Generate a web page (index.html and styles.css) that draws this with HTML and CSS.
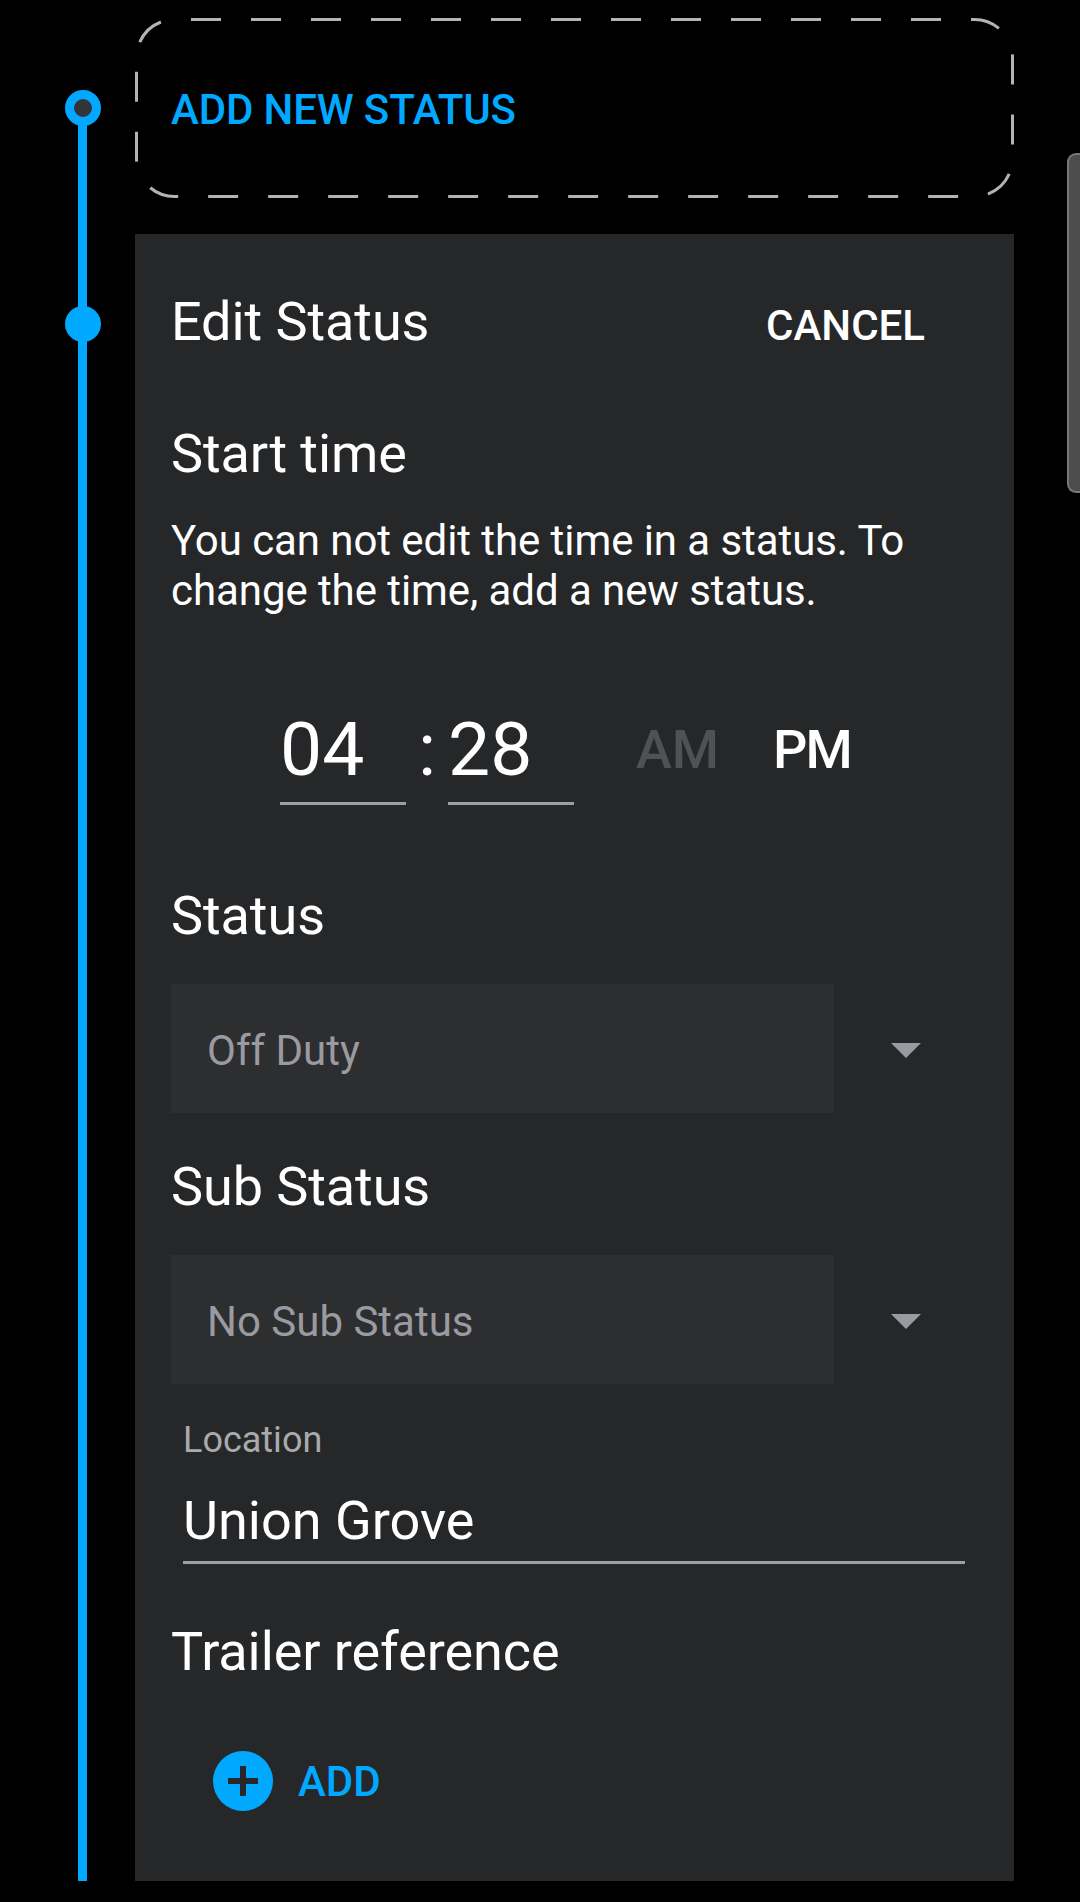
FILE: index.html
```html
<!doctype html>
<html>

<head>
    <link rel="stylesheet" href="styles.css">
</head>

<body>
    <div class="page">
        <div class="rail"></div>

        <div class="add-box">
            <span class="dot dot-open"></span>
            <svg class="dash-frame" width="879" height="180">
                <rect x="1.5" y="1.5" width="876" height="177" rx="38" ry="38"></rect>
            </svg>
            <span class="add-status">ADD NEW STATUS</span>
        </div>

        <div class="card">
            <span class="dot dot-full"></span>

            <div class="card-head">
                <div class="title">Edit Status</div>
                <div class="cancel">CANCEL</div>
            </div>

            <div class="title start-title">Start time</div>
            <div class="note">You can not edit the time in a status. To change the time, add a new status.</div>

            <div class="time-row">
                <div class="time-field">04</div>
                <div class="colon">:</div>
                <div class="time-field">28</div>
                <div class="ampm am">AM</div>
                <div class="ampm pm">PM</div>
            </div>

            <div class="title status-title">Status</div>
            <div class="select-row">
                <div class="select-box">Off Duty</div>
                <div class="arrow"></div>
            </div>

            <div class="title sub-title">Sub Status</div>
            <div class="select-row">
                <div class="select-box">No Sub Status</div>
                <div class="arrow"></div>
            </div>

            <div class="location">
                <div class="location-label">Location</div>
                <div class="location-value">Union Grove</div>
            </div>

            <div class="title trailer-title">Trailer reference</div>
            <div class="add-row">
                <svg class="plus" width="60" height="60" viewBox="0 0 60 60">
                    <circle cx="30" cy="30" r="30" fill="#00a8ff"></circle>
                    <path d="M27 15h6v12h12v6H33v12h-6V33H15v-6h12z" fill="#262729"></path>
                </svg>
                <span class="add-text">ADD</span>
            </div>
        </div>

        <div class="scroll-thumb"></div>
    </div>
</body>

</html>
```

FILE: styles.css
```css
* {
    box-sizing: border-box;
    margin: 0;
    padding: 0;
}

html,
body {
    height: 100%;
    overflow: hidden;
}

body {
    background: #000;
    font-family: Roboto, "Noto Sans", sans-serif;
    color: #fff;
}

.page {
    position: relative;
    height: 1902px;
    padding: 18px 66px 0 135px;
}

.rail {
    position: absolute;
    left: 78px;
    top: 108px;
    width: 9px;
    height: 1773px;
    background: #00a8ff;
}

.dot {
    position: absolute;
    left: -70px;
    width: 36px;
    height: 36px;
    border-radius: 50%;
    background: #00a8ff;
}

.dot-open {
    top: 72px;
    border: 9px solid #00a8ff;
    background: #333437;
}

.dot-full {
    top: 72px;
}

.add-box {
    position: relative;
    height: 180px;
    display: flex;
    align-items: center;
    padding: 3px 0 0 36px;
}

.dash-frame {
    position: absolute;
    left: 0;
    top: 0;
}

.dash-frame rect {
    fill: none;
    stroke: #b3b3b3;
    stroke-width: 3;
    stroke-dasharray: 30 30;
    stroke-dashoffset: 43.5;
}

.add-status {
    font-size: 42px;
    font-weight: 500;
    letter-spacing: -0.15px;
    color: #00a8ff;
}

.card {
    position: relative;
    margin-top: 36px;
    padding: 58px 0 70px 36px;
    background: #262729;
}

.card-head {
    display: flex;
    justify-content: space-between;
    align-items: baseline;
    padding-right: 89px;
}

.title {
    font-size: 54px;
    line-height: 60px;
    letter-spacing: -0.08px;
}

.cancel {
    font-size: 42px;
    font-weight: 500;
}

.start-title {
    margin-top: 72px;
}

.note {
    width: 780px;
    margin-top: 32px;
    font-size: 42px;
    line-height: 50px;
    letter-spacing: -0.07px;
}

.time-row {
    display: flex;
    margin-top: 89px;
    margin-left: 109px;
}

.time-field {
    width: 126px;
    height: 100px;
    font-size: 75px;
    line-height: 88px;
    border-bottom: 3px solid #9e9ea3;
}

.colon {
    width: 42px;
    font-size: 75px;
    line-height: 88px;
    text-align: center;
}

.ampm {
    font-size: 54px;
    font-weight: 500;
    line-height: 89px;
}

.am {
    margin-left: 62px;
    color: #505154;
}

.pm {
    margin-left: 54px;
    letter-spacing: -2px;
}

.status-title {
    margin-top: 81px;
}

.select-row {
    display: flex;
    align-items: center;
    margin-top: 38px;
}

.select-box {
    width: 663px;
    height: 129px;
    padding: 2px 0 0 36px;
    background: #2d2e30;
    color: #9a9aa0;
    font-size: 42px;
    line-height: 129px;
}

.arrow {
    margin: 4px 0 0 57px;
    width: 0;
    height: 0;
    border-left: 15px solid transparent;
    border-right: 15px solid transparent;
    border-top: 15px solid #9a9aa3;
}

.sub-title {
    margin-top: 44px;
}

.location {
    width: 782px;
    margin-top: 34px;
    margin-left: 12px;
}

.location-label {
    font-size: 36px;
    line-height: 44px;
    color: #aaaaae;
}

.location-value {
    margin-top: 19px;
    font-size: 54px;
    line-height: 80px;
    border-bottom: 3px solid #9e9ea3;
}

.trailer-title {
    margin-top: 58px;
}

.add-row {
    display: flex;
    align-items: center;
    gap: 25px;
    margin-top: 69px;
    margin-left: 42px;
}

.add-text {
    font-size: 42px;
    font-weight: 500;
    color: #00a8ff;
}

.scroll-thumb {
    position: absolute;
    right: 0;
    top: 153px;
    width: 13px;
    height: 340px;
    background: #4d4d4d;
    border: 2px solid #777;
    border-right: 0;
    border-radius: 9px 0 0 9px;
}
```
